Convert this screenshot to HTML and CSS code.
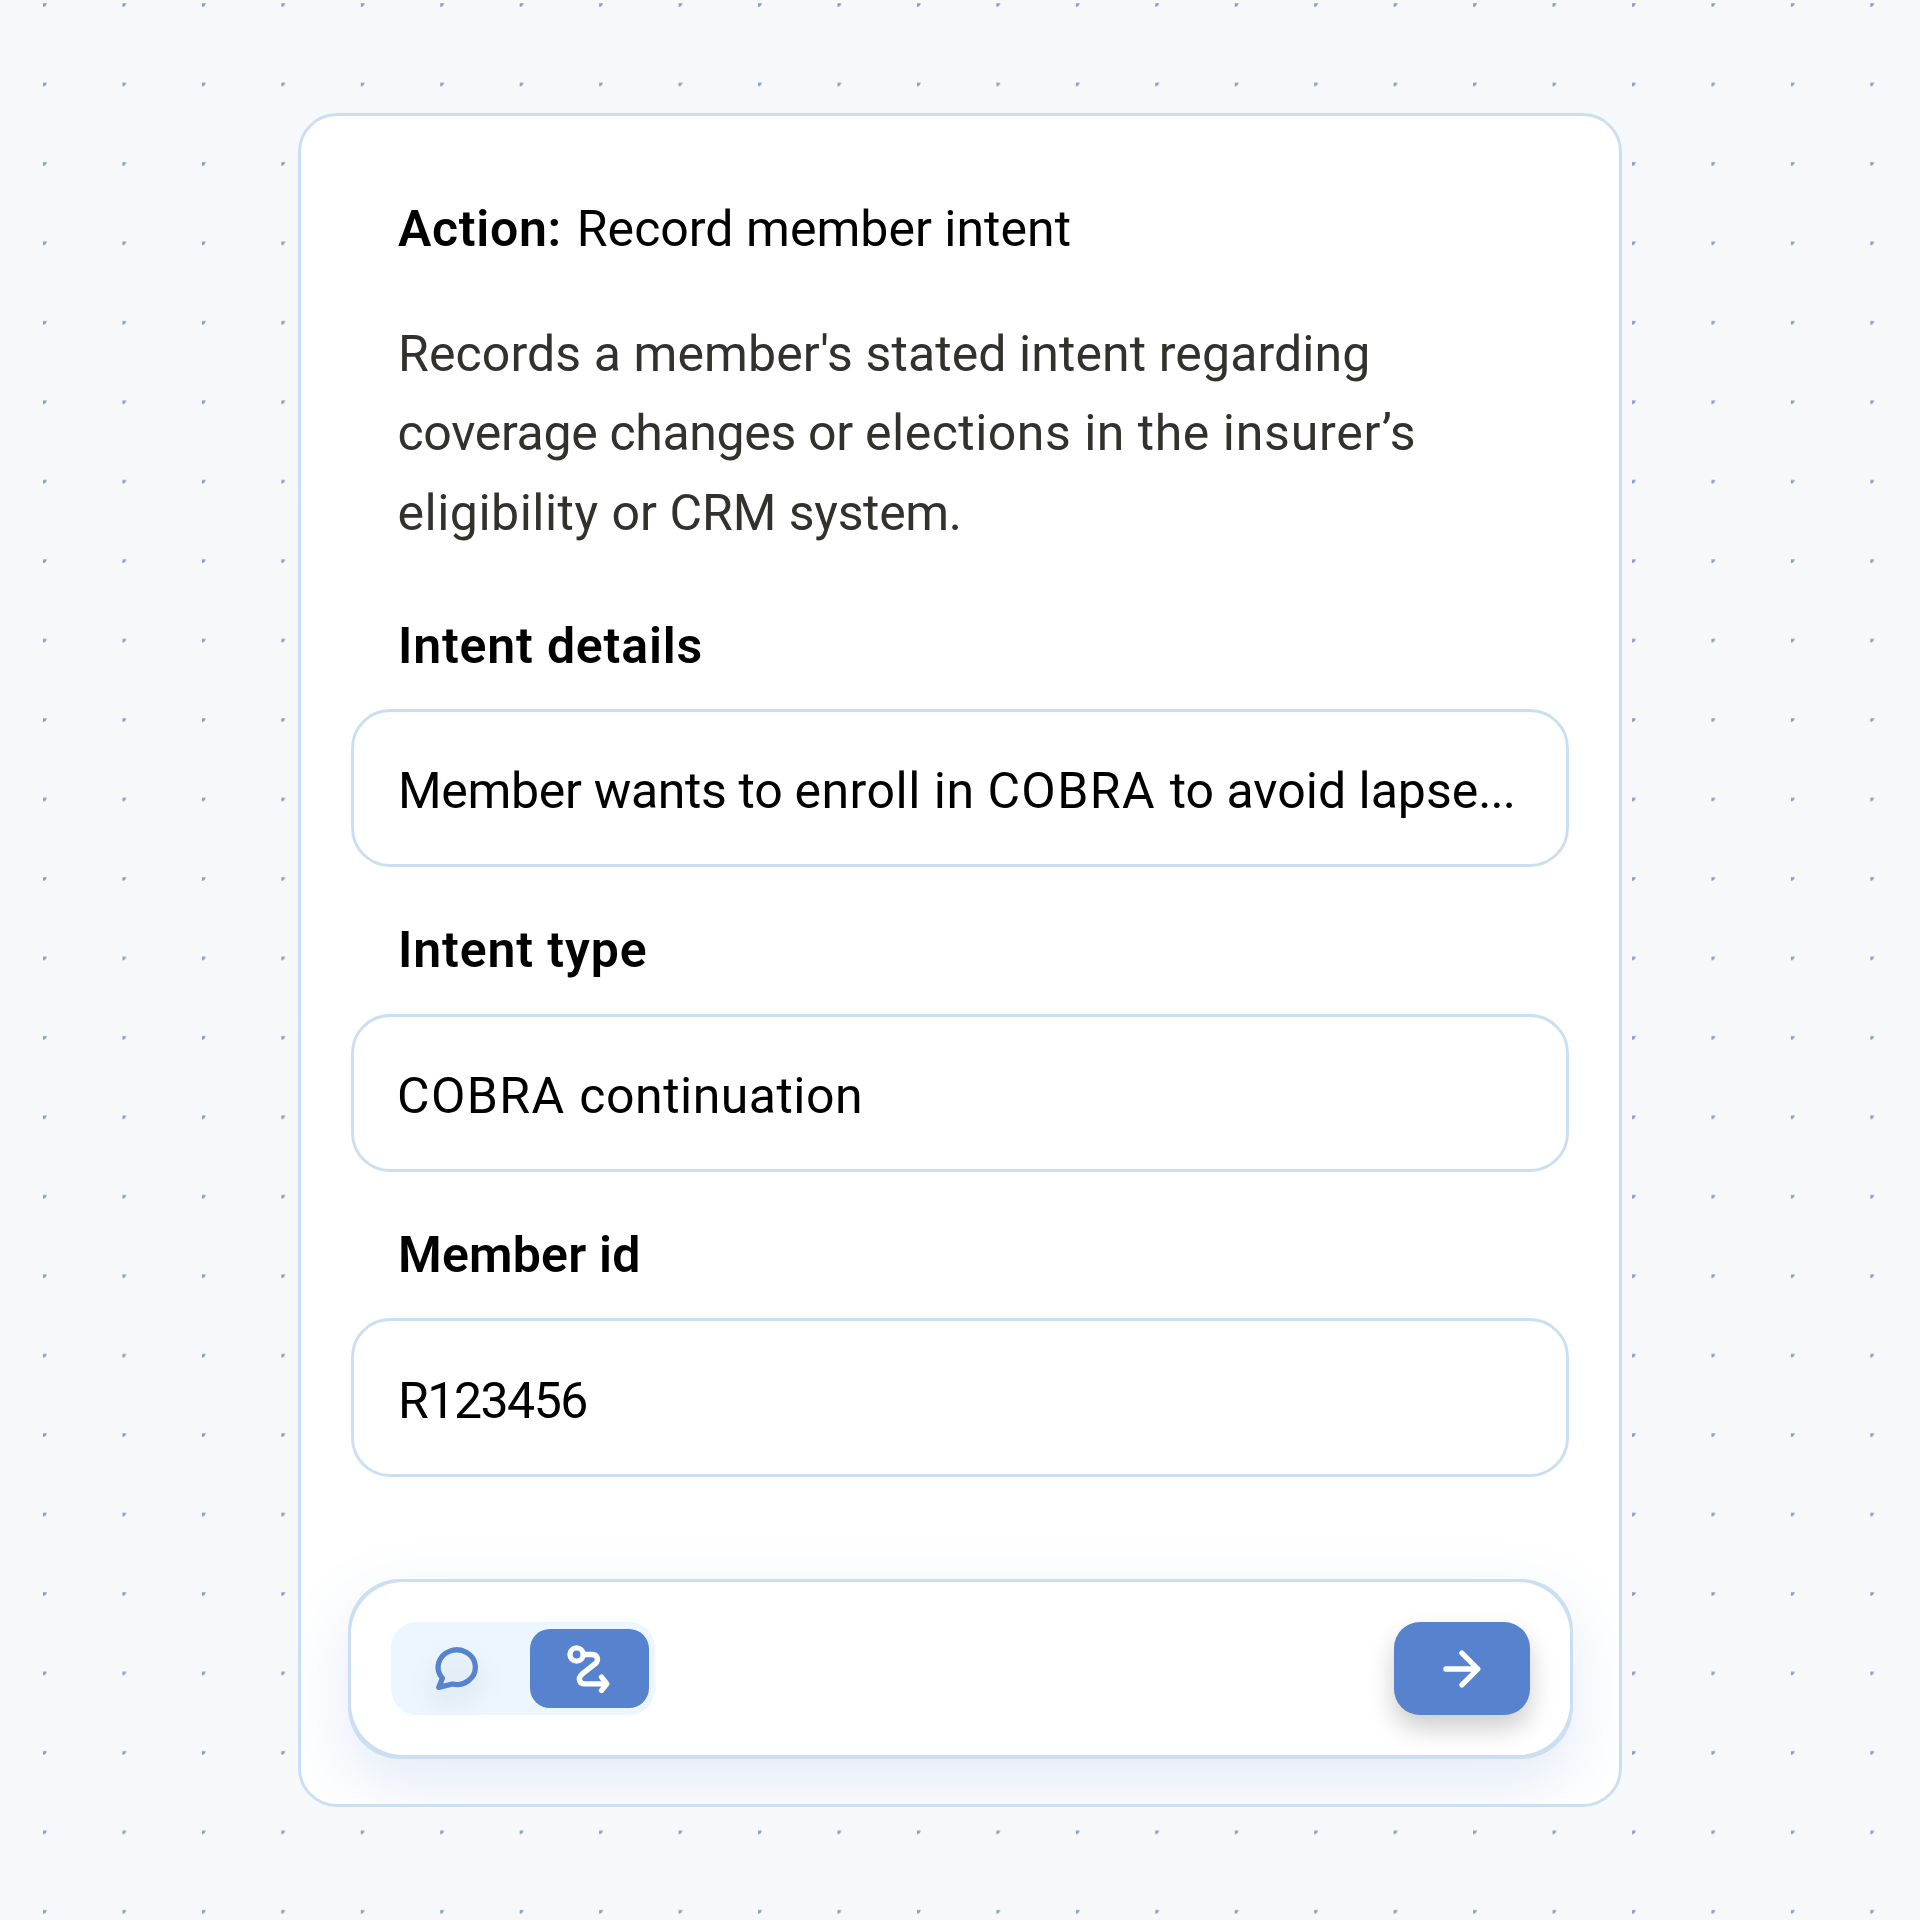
FILE: index.html
```
<!DOCTYPE html>
<html lang="en">
<head>
  <meta charset="utf-8">
  <title>Record member intent</title>
  <link rel="stylesheet" href="styles.css">
</head>
<body>
  <svg class="dots" width="1920" height="1920" aria-hidden="true">
    <defs>
      <pattern id="dot" x="43" y="3" width="79.45" height="79.45" patternUnits="userSpaceOnUse">
        <path d="M0 0.3H4L3 2.2L1.8 3.6L0 4Z" fill="#8b9bcb"/>
      </pattern>
    </defs>
    <rect width="1920" height="1920" fill="url(#dot)"/>
  </svg>

  <main class="card">
    <h1 class="title"><strong class="title-kind">Action:</strong><span class="title-name">Record member intent</span></h1>
    <p class="description">
      <span class="line line-1">Records a member's stated intent regarding</span>
      <span class="line"><span class="tight">coverage changes or </span><span class="open">elections in the </span><span class="wide">insurer’s</span></span>
      <span class="line"><span class="open">eligibility </span>or CRM <span class="tight">system.</span></span>
    </p>

    <section class="field">
      <h2 class="label label-details">Intent details</h2>
      <div class="value"><span class="tight">Member wants to </span><span class="open">enroll in </span><span class="caps">COBRA </span><span>to avoid lapse</span><span class="ellipsis">...</span></div>
    </section>
    <section class="field">
      <h2 class="label label-type">Intent type</h2>
      <div class="value value-type"><span class="caps">COBRA </span><span class="open">continuation</span></div>
    </section>
    <section class="field">
      <h2 class="label label-id">Member id</h2>
      <div class="value value-id">R123456</div>
    </section>

    <footer class="toolbar">
      <div class="toolbar-body">
        <div class="modes">
          <button class="mode" aria-label="Chat">
            <svg class="icon-chat" width="56" height="56" viewBox="0 0 56 56" fill="none" stroke="#5682ce" stroke-width="5.3" stroke-linecap="round" stroke-linejoin="round">
              <path d="M13.4 37.2A18.6 17.3 0 1 1 23.4 43L9.7 46.4Z"/>
            </svg>
          </button>
          <button class="mode mode-active" aria-label="Flow">
            <svg width="56" height="56" viewBox="0 0 56 56" fill="none" stroke="#fff" stroke-width="5.4" stroke-linecap="round" stroke-linejoin="round">
              <circle cx="15.6" cy="13.5" r="6.6"/>
              <path d="M22.5 13.5H31C36.3 13.5 38.4 19.2 34.3 22.7L21 33.2C16.4 37.2 18.4 42.9 23.4 42.9H44"/>
              <path d="M40.6 36.2L45.8 42.9L40.6 49.4"/>
            </svg>
          </button>
        </div>
        <button class="submit" aria-label="Continue">
          <svg width="56" height="56" viewBox="0 0 56 56" fill="none" stroke="#fff" stroke-width="5.3" stroke-linecap="round" stroke-linejoin="round">
            <path d="M11.9 28H43.7M27.9 12.1L43.8 28L27.9 43.9"/>
          </svg>
        </button>
      </div>
    </footer>
  </main>
</body>
</html>
```
FILE: styles.css
```
* { box-sizing: border-box; }

body {
  margin: 0;
  height: 1920px;
  padding: 113px 298px 0;
  background: #f6f8fa;
  font-family: Roboto, "Liberation Sans", sans-serif;
  font-size: 50px;
  line-height: 80px;
  color: #000;
  overflow: hidden;
}

.dots { position: absolute; inset: 0; }

.card {
  position: relative;
  width: 1324px;
  height: 1694px;
  padding: 72.5px 50.5px 0 50px;
  border: 3px solid #cbdff2;
  border-radius: 39px;
  background: #fff;
  overflow: hidden;
}

.title {
  display: flex;
  gap: 15px;
  margin: 0;
  padding-left: 47px;
  font-size: 50px;
  font-weight: 400;
}
.title-kind { font-weight: 600; letter-spacing: 0.67px; }
.title-name { letter-spacing: 0.02px; }

.description {
  margin: 46.3px 0 0;
  padding-left: 46.5px;
  line-height: 79.4px;
  color: #33312c;
}
.line { display: block; white-space: pre; }
.line-1 { padding-left: 0.5px; letter-spacing: 0.1px; }

/* Word-group tracking */
.tight { letter-spacing: -0.33px; }
.open { letter-spacing: 0.5px; }
.wide { letter-spacing: 0.8px; }
.caps { letter-spacing: 1.4px; }
.ellipsis { letter-spacing: -0.9px; }

.field { margin-top: 43.1px; }
.description + .field { margin-top: 52.8px; }

.label {
  margin: 0 0 23.2px;
  padding-left: 47px;
  font-size: 50px;
  font-weight: 600;
}
.label-details { letter-spacing: 0.82px; }
.label-type { letter-spacing: 0.88px; }
.label-id { letter-spacing: 0.22px; }

.value {
  display: flex;
  align-items: center;
  height: 158.4px;
  padding: 6px 0 0 44px;
  border: 3px solid #cbdff2;
  border-radius: 39px;
  white-space: pre;
}
.value-type { padding-left: 43px; }
.value-id { letter-spacing: -1.5px; }

.toolbar {
  margin: 102px -4px 0 -3.5px;
  height: 180px;
  padding: 3.6px 3px;
  border-radius: 52px;
  background: #cbdff2;
  box-shadow: 0 26px 66px rgba(86, 130, 206, 0.17);
}
.toolbar-body {
  display: flex;
  justify-content: space-between;
  align-items: center;
  height: 100%;
  padding: 0 40px;
  border-radius: 52px;
  background: #fff;
  overflow: hidden;
}

button { border: 0; padding: 0; font: inherit; }

.modes {
  display: flex;
  align-items: center;
  width: 264.5px;
  height: 93px;
  padding-left: 6.5px;
  gap: 13.5px;
  border-radius: 26px;
  background: #ebf6ff;
}
.mode {
  display: flex;
  align-items: center;
  justify-content: center;
  width: 119px;
  height: 79.4px;
  border-radius: 20px;
  background: none;
}
.mode-active { background: #5682ce; }
.icon-chat { overflow: visible; filter: drop-shadow(0 13px 12px rgba(0, 0, 0, 0.14)); }

.submit {
  display: flex;
  align-items: center;
  justify-content: center;
  width: 135.5px;
  height: 93px;
  border-radius: 26px;
  background: #5682ce;
  box-shadow: 0 13px 26px rgba(0, 0, 0, 0.2);
}
```
